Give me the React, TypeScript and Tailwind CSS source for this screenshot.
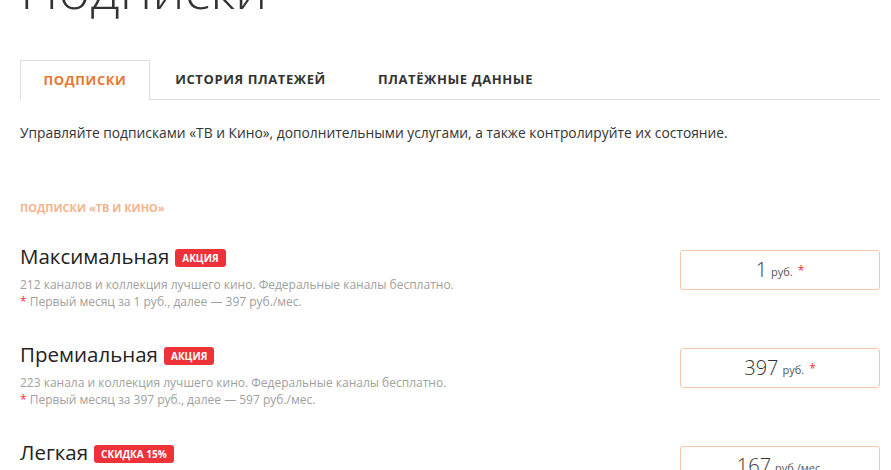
import React from "react";

const font = { fontFamily: '"Open Sans", "Noto Sans", sans-serif' };

type Item = {
  title: string;
  badge: string;
  desc: string;
  note?: string;
  price: string;
  unit: string;
  star: boolean;
};

const items: Item[] = [
  {
    title: "Максимальная",
    badge: "АКЦИЯ",
    desc: "212 каналов и коллекция лучшего кино. Федеральные каналы бесплатно.",
    note: "Первый месяц за 1 руб., далее — 397 руб./мес.",
    price: "1",
    unit: "руб.",
    star: true,
  },
  {
    title: "Премиальная",
    badge: "АКЦИЯ",
    desc: "223 канала и коллекция лучшего кино. Федеральные каналы бесплатно.",
    note: "Первый месяц за 397 руб., далее — 597 руб./мес.",
    price: "397",
    unit: "руб.",
    star: true,
  },
  {
    title: "Легкая",
    badge: "СКИДКА 15%",
    desc: "Пакет каналов и фильмы. Федеральные каналы бесплатно.",
    price: "167",
    unit: "руб./мес.",
    star: false,
  },
];

export default function App() {
  return (
    <div className="w-[891px] h-[470px] overflow-hidden bg-white" style={font}>
      <div className="pl-5 pr-[11px]">
        <h1 className="mt-[-40px] h-[56px] text-[54px] leading-[56px] font-light text-[#333]">Подписки</h1>
        <div className="mt-[44px] flex h-[40px] border-b border-[#dcdcdc]">
          <div className="-mb-px flex w-[130px] items-center justify-center border border-b-0 border-[#dcdcdc] bg-white text-[13px] font-bold tracking-[0.6px] text-[#e8782f]">
            ПОДПИСКИ
          </div>
          <div className="flex w-[201px] items-center justify-center text-[13px] font-bold tracking-[0.6px] text-[#333]">
            ИСТОРИЯ ПЛАТЕЖЕЙ
          </div>
          <div className="flex w-[209px] items-center justify-center text-[13px] font-bold tracking-[0.6px] text-[#333]">
            ПЛАТЁЖНЫЕ ДАННЫЕ
          </div>
        </div>
        <p className="mt-[23px] text-[13.8px] leading-5 text-[#333]">
          Управляйте подписками «ТВ и Кино», дополнительными услугами, а также контролируйте их состояние.
        </p>
        <div className="mt-[57px] text-[11px] font-bold leading-4 text-[#f3b48c]">ПОДПИСКИ «ТВ И КИНО»</div>
        <div className="mt-[25px] flex flex-col gap-[29px]">
          {items.map((it) => (
            <div key={it.title} className="flex items-start justify-between">
              <div>
                <div className="flex items-center gap-[6px]">
                  <span className="text-[20.5px] leading-[30px] text-[#222]">{it.title}</span>
                  <span className="mt-[3px] rounded-[3px] bg-[#ee3239] px-[7px] text-[10px] font-bold leading-[18px] text-white">
                    {it.badge}
                  </span>
                </div>
                <div className="mt-[5px] text-[12px] leading-[17px] text-[#a0a0a0]">{it.desc}</div>
                <div className="text-[12px] leading-[17px] text-[#a0a0a0]">
                  {it.note ? (
                    <>
                      <span className="text-[#ee3239]">*</span> {it.note}
                    </>
                  ) : (
                    "\u00a0"
                  )}
                </div>
              </div>
              <div className="mt-[9px] flex h-[40px] w-[200px] items-center justify-center rounded-[3px] border border-[#f0c9ad] text-[#333]">
                <span className="text-[20px] font-light">{it.price}</span>
                <span className="ml-[4px] mt-[4px] text-[11px] text-[#555]">{it.unit}</span>
                {it.star && <span className="ml-[5px] mt-[2px] text-[12px] text-[#ee3239]">*</span>}
              </div>
            </div>
          ))}
        </div>
      </div>
    </div>
  );
}
